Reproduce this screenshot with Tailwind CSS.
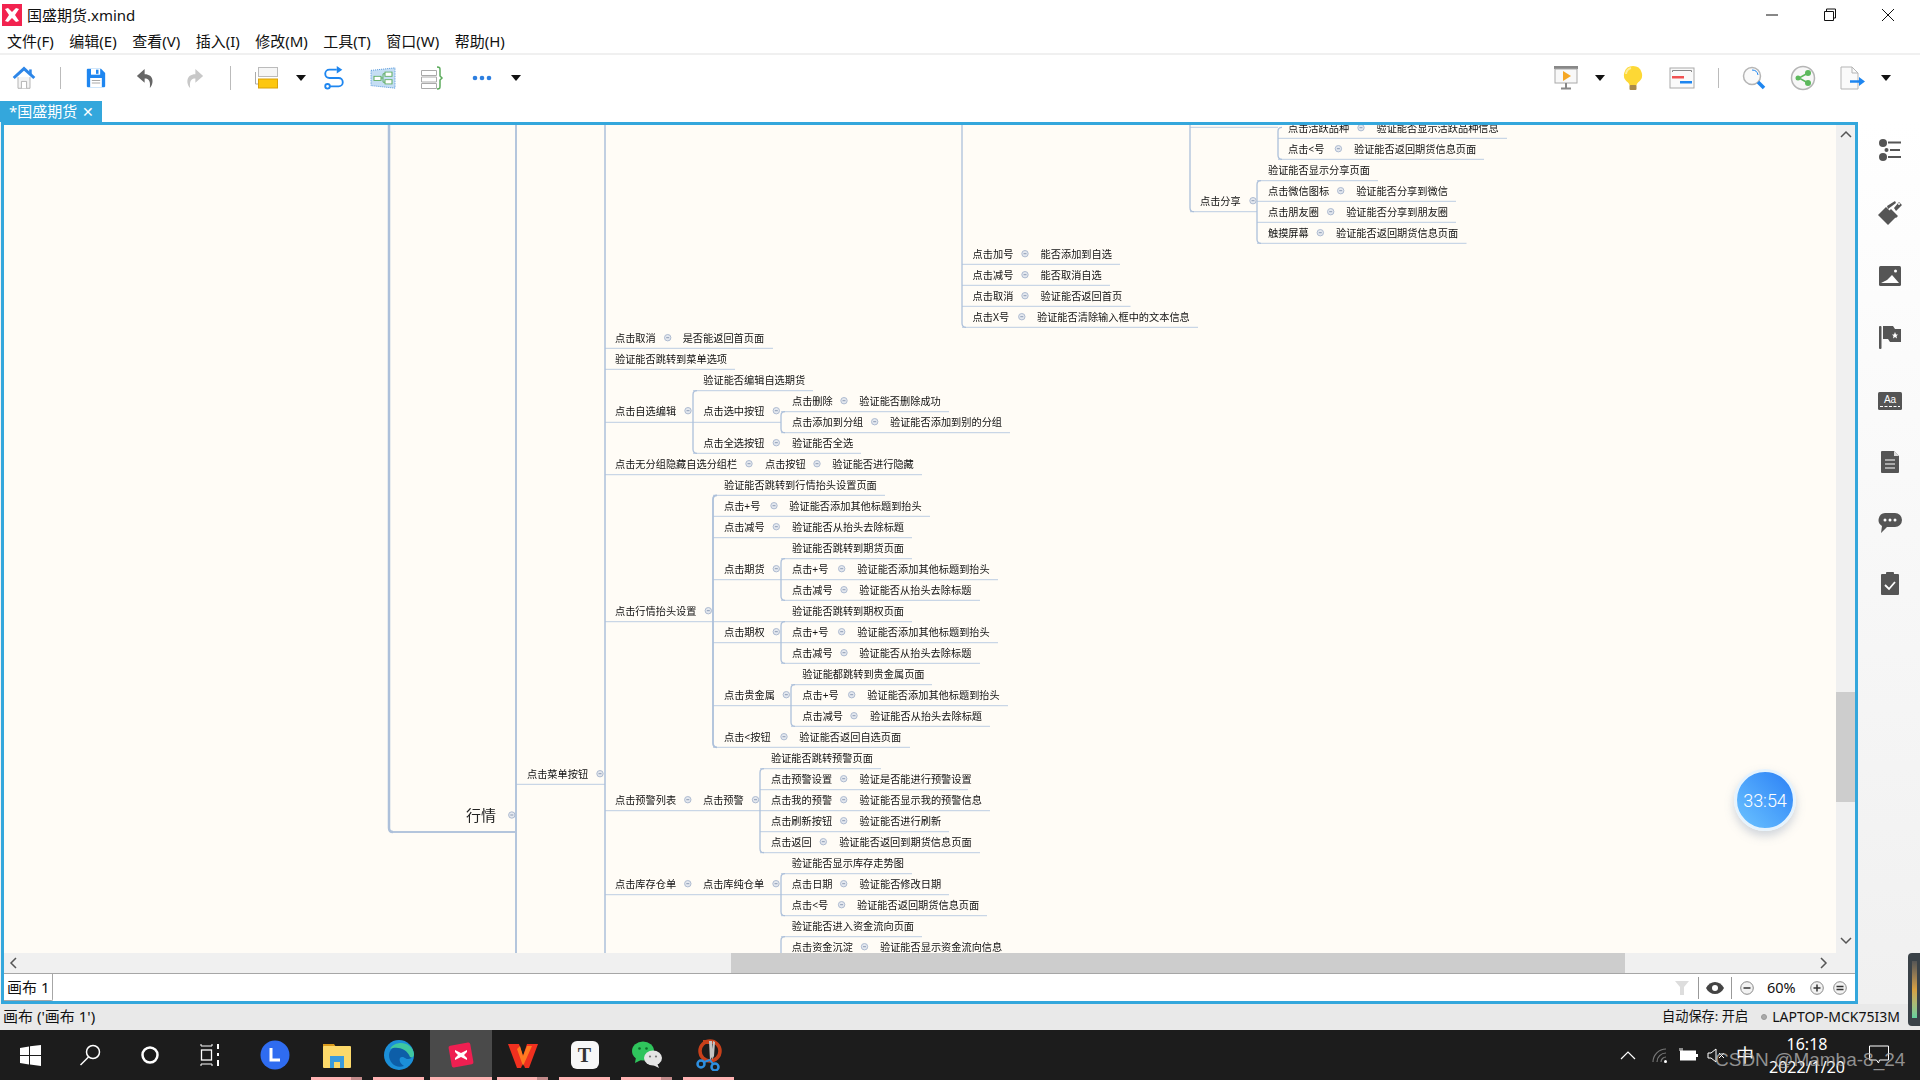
<!DOCTYPE html>
<html lang="zh">
<head>
    <meta charset="UTF-8">
    <title>国盛期货.xmind</title>
    <script src="https://cdn.jsdelivr.net/npm/@tailwindcss/browser@4"></script>
</head>
<body class="w-[1920px] h-[1080px] overflow-hidden relative flex flex-col bg-white text-[#111] [font-family:'Noto_Sans','Noto_Sans_CJK_SC',sans-serif]">

    <!-- title bar -->
    <div class="h-[30px] flex items-center shrink-0">
        <svg class="ml-[2px] w-[20px] h-[22px]" viewBox="0 0 20 22"><rect width="20" height="22" fill="#f2234f"/><path d="M3 5l3-1 4 4 4-4 3 1-4 6 4 6-3 1-4-4-4 4-3-1 4-6z" fill="#fff"/></svg>
        <span class="ml-[5px] text-[15px] leading-none">国盛期货.xmind</span>
        <div class="ml-auto flex items-center">
            <svg class="w-[14px] h-[14px]" viewBox="0 0 14 14"><path d="M1 7h12" stroke="#111" fill="none"/></svg>
            <svg class="ml-[44px] w-[14px] h-[14px]" viewBox="0 0 14 14"><path d="M3.500 3V1h9v9h-2M1.500 3.500h9v9h-9z" stroke="#111" fill="none"/></svg>
            <svg class="ml-[44px] mr-[25px] w-[14px] h-[14px]" viewBox="0 0 14 14"><path d="M1 1l12 12M13 1L1 13" stroke="#111" fill="none"/></svg>
        </div>
    </div>

    <!-- menu -->
    <div class="h-[23px] flex items-center shrink-0 pl-[7px] gap-[15.500px] text-[15px] leading-none">
        <span>文件(F)</span><span>编辑(E)</span><span>查看(V)</span><span>插入(I)</span><span>修改(M)</span><span>工具(T)</span><span>窗口(W)</span><span>帮助(H)</span>
    </div>
    <div class="h-[2px] bg-[#f0f0f0] shrink-0"></div>

    <!-- toolbar -->
    <div class="h-[46px] flex items-center justify-between shrink-0 pr-[29px]">
        <div class="flex items-center">
            <svg class="ml-[12px] w-[24px] h-[24px]" viewBox="0 0 28 28"><path d="M7 13v13h14V13" fill="#f4f4f4" stroke="#aaa"/><path d="M11 26v-8h6v8" fill="#fff" stroke="#aaa"/><path d="M2 14L14 3l12 11" fill="none" stroke="#2d86e8" stroke-width="3.500"/><rect x="20" y="4" width="3" height="6" fill="#2d86e8"/></svg>
            <div class="ml-[24px] w-px h-[22px] bg-[#bbb]"></div>
            <svg class="ml-[25px] w-[20px] h-[20px]" viewBox="0 0 24 24"><path d="M2 1h16l5 5v16a1 1 0 0 1-1 1H2a1 1 0 0 1-1-1V2a1 1 0 0 1 1-1z" fill="#1e86f0"/><rect x="6" y="1" width="11" height="7" fill="#fff"/><rect x="12" y="2" width="3" height="5" fill="#1e86f0"/><rect x="5" y="12" width="14" height="11" fill="#fff"/><path d="M7 15h10M7 18h10" stroke="#999"/></svg>
            <svg class="ml-[30px] w-[19px] h-[21px]" viewBox="0 0 22 24"><path d="M10 1L1 9l9 8v-5c5 0 7 3 6 11 5-5 5-16-6-16z" fill="#666"/></svg>
            <svg class="ml-[29.500px] w-[19px] h-[21px]" viewBox="0 0 22 24"><path d="M12 1l9 8-9 8v-5c-5 0-7 3-6 11-5-5-5-16 6-16z" fill="#c8c8c8"/></svg>
            <div class="ml-[26.500px] w-px h-[24px] bg-[#bbb]"></div>
            <svg class="ml-[24px] w-[24px] h-[22px]" viewBox="0 0 24 22"><path d="M.5 5v12H3" fill="none" stroke="#aaa"/><rect x="3.500" y="0.500" width="19" height="9" fill="#f6f6f6" stroke="#bbb"/><rect x="3.500" y="12" width="19" height="9" fill="#fdc70f" stroke="#d9a20a"/></svg>
            <svg class="ml-[17px] w-[10px] h-[6px]" viewBox="0 0 10 6"><path d="M0 0h10L5 6z" fill="#111"/></svg>
            <svg class="ml-[16px] w-[24px] h-[24px]" viewBox="0 0 24 26"><path d="M15 4H7a4.500 4.500 0 0 0 0 9h10a4.500 4.500 0 0 1 0 9H7" fill="none" stroke="#1e86f0" stroke-width="2"/><path d="M15 0l6 4-6 4z" fill="#1e86f0"/><circle cx="5" cy="22" r="2.500" fill="#fff" stroke="#1e86f0" stroke-width="2"/></svg>
            <svg class="ml-[24px] w-[26px] h-[22px]" viewBox="0 0 26 26" preserveAspectRatio="none"><path d="M1 4l24-3v24L1 22z" fill="#c5def4" stroke="#4a90d9" stroke-dasharray="1 1"/><rect x="4" y="11" width="7" height="5" fill="#fff" stroke="#5cab5c"/><rect x="15" y="6" width="7" height="5" fill="#fff" stroke="#5cab5c"/><rect x="15" y="15" width="7" height="5" fill="#fff" stroke="#5cab5c"/><path d="M11 13h2V8h2M13 13v5h2" fill="none" stroke="#5cab5c"/></svg>
            <svg class="ml-[24px] w-[24px] h-[24px]" viewBox="0 0 24 24"><path d="M1.500 4.500h15v5h-15zM1.500 11h15v5h-15zM1.500 17.500h15v5h-15z" fill="#fff" stroke="#aaa"/><path d="M17 1c3 0 3 1 3 3v6l2 2-2 2v6c0 2 0 3-3 3" fill="none" stroke="#5cab5c" stroke-width="1.500"/></svg>
            <svg class="ml-[28px] w-[20px] h-[6px]" viewBox="0 0 20 6"><circle cx="3" cy="3" r="2.300" fill="#2d7fe0"/><circle cx="10" cy="3" r="2.300" fill="#2d7fe0"/><circle cx="17" cy="3" r="2.300" fill="#2d7fe0"/></svg>
            <svg class="ml-[19px] w-[10px] h-[6px]" viewBox="0 0 10 6"><path d="M0 0h10L5 6z" fill="#111"/></svg>
        </div>
        <div class="flex items-center">
            <svg class="w-[26px] h-[24px]" viewBox="0 0 26 24"><rect x="1" width="24" height="3" fill="#888"/><rect x="2" y="3" width="22" height="14" fill="#f8f8f8" stroke="#aaa"/><path d="M10 5l8 5-8 5z" fill="#f5a623"/><path d="M13 17v5M8 22.500h10" stroke="#888" stroke-width="2"/></svg>
            <svg class="ml-[16px] w-[10px] h-[6px]" viewBox="0 0 10 6"><path d="M0 0h10L5 6z" fill="#111"/></svg>
            <svg class="ml-[18px] w-[20px] h-[26px]" viewBox="0 0 20 26"><path d="M10 1a9 9 0 0 0-5 16.500c1 1 1.500 2 1.500 3h7c0-1 .5-2 1.500-3A9 9 0 0 0 10 1z" fill="#fdd835"/><path d="M3 9a7 7 0 0 1 5-6" stroke="#ffee9a" stroke-width="2" fill="none"/><rect x="6.500" y="20" width="7" height="5" rx="1" fill="#a98a4a"/></svg>
            <svg class="ml-[26px] w-[26px] h-[22px]" viewBox="0 0 26 22"><rect x="1" y="1" width="24" height="20" fill="#fafafa" stroke="#aaa"/><path d="M3.500 5V3.500h19V5" fill="none" stroke="#888"/><rect x="3" y="9" width="12" height="2.500" fill="#f05252"/><rect x="11" y="14" width="12" height="2.500" fill="#1e86f0"/></svg>
            <div class="ml-[23px] w-px h-[20px] bg-[#bbb]"></div>
            <svg class="ml-[23px] w-[24px] h-[24px]" viewBox="0 0 24 24"><circle cx="10" cy="10" r="8.500" fill="#fafafa" stroke="#b5b5b5" stroke-width="1.500"/><path d="M10 4a6 6 0 0 1 6 5" stroke="#1e86f0" fill="none"/><path d="M16 16l6 6" stroke="#1e86f0" stroke-width="3.500"/></svg>
            <svg class="ml-[24px] w-[26px] h-[26px]" viewBox="0 0 26 26"><circle cx="13" cy="13" r="11.500" fill="#f7f7f7" stroke="#b5b5b5" stroke-width="1.500"/><path d="M18 8l-9 5 9 5" stroke="#5cb85c" stroke-width="1.500" fill="none"/><circle cx="18" cy="8" r="3" fill="#5cb85c"/><circle cx="8" cy="13" r="2.500" fill="#5cb85c"/><circle cx="18" cy="18" r="3" fill="#5cb85c"/></svg>
            <svg class="ml-[24px] w-[26px] h-[24px]" viewBox="0 0 26 24"><path d="M1 1h11l6 6v16H1z" fill="#fafafa" stroke="#b5b5b5"/><path d="M12 1v6h6" fill="none" stroke="#b5b5b5"/><path d="M10 15.500h10" stroke="#1e86f0" stroke-width="2.500"/><path d="M19 11l6 4.500-6 4.500z" fill="#1e86f0"/></svg>
            <svg class="ml-[15px] w-[10px] h-[6px]" viewBox="0 0 10 6"><path d="M0 0h10L5 6z" fill="#111"/></svg>
        </div>
    </div>

    <!-- tab -->
    <div class="h-[21px] shrink-0 flex items-stretch">
        <div class="w-[102px] bg-[#34a7dc] text-white text-[15px] leading-none flex items-center pl-[9px]">*国盛期货<span class="ml-[5px] text-[14px]">✕</span></div>
    </div>

    <!-- main area -->
    <div class="h-[882px] shrink-0 flex bg-[#f2f2f2]">
        <div class="w-[1857px] ml-px border-[3px] border-[#34a7dc] flex flex-col bg-white">
            <div class="flex h-[828px] shrink-0">
                <div id="canvas" class="w-[1832px] relative overflow-hidden bg-[#fffcf6]">
                    <svg id="lines" class="absolute left-0 top-0" width="1832" height="828"></svg>
                    <div id="topics" class="absolute left-0 top-0 blur-[0.25px]"></div>
                    <div class="absolute left-[1730px] top-[644px] w-[62px] h-[62px] rounded-full border-[3px] border-[#e6f3fd] bg-linear-to-tr from-[#6cc3ff] to-[#2b7ff5] shadow-[0_5px_10px_rgba(120,140,170,0.35)] flex items-center justify-center text-white text-[18px] font-light [font-family:Roboto,sans-serif]">33:54</div>
                </div>
                <div class="w-[19px] bg-[#f0f0f0] flex flex-col items-center relative">
                    <svg class="mt-[5px] w-[12px] h-[8px]" viewBox="0 0 12 8"><path d="M1 7l5-5 5 5" fill="none" stroke="#555" stroke-width="1.500"/></svg>
                    <div class="mt-[554px] w-full h-[110px] bg-[#cdcdcd]"></div>
                    <svg class="mt-[135px] w-[12px] h-[8px]" viewBox="0 0 12 8"><path d="M1 1l5 5 5-5" fill="none" stroke="#555" stroke-width="1.500"/></svg>
                </div>
            </div>
            <div class="h-[20px] shrink-0 bg-[#f0f0f0] flex items-center">
                <svg class="ml-[5px] w-[8px] h-[12px]" viewBox="0 0 8 12"><path d="M7 1L2 6l5 5" fill="none" stroke="#555" stroke-width="1.500"/></svg>
                <div class="ml-[714px] w-[894px] h-full bg-[#cdcdcd]"></div>
                <svg class="ml-[195px] w-[8px] h-[12px]" viewBox="0 0 8 12"><path d="M1 1l5 5-5 5" fill="none" stroke="#555" stroke-width="1.500"/></svg>
            </div>
            <div class="h-[28px] shrink-0 border-t border-[#a6a6a6] flex items-center text-[15px] leading-none">
                <div class="w-[49px] h-[27px] flex items-center pl-[3px] border-r border-b border-[#a6a6a6] rounded-br-[2px] whitespace-nowrap">画布 1</div>
                <div class="ml-auto flex items-center pr-[8px]">
                    <svg class="w-[14px] h-[16px]" viewBox="0 0 14 16"><path d="M0 1h14L9 7v8H5V7z" fill="#ddd"/></svg>
                    <div class="ml-[9px] w-px h-[22px] bg-[#999]"></div>
                    <svg class="ml-[7px] w-[18px] h-[12px]" viewBox="0 0 18 12"><path d="M0 6c4-8 14-8 18 0-4 8-14 8-18 0z" fill="#444"/><circle cx="9" cy="6" r="3" fill="#fff"/></svg>
                    <div class="ml-[7px] w-px h-[22px] bg-[#999]"></div>
                    <svg class="ml-[8px] w-[14px] h-[14px]" viewBox="0 0 14 14"><circle cx="7" cy="7" r="6.300" fill="#f2f2f2" stroke="#888"/><path d="M3.500 7h7" stroke="#333" stroke-width="1.500"/></svg>
                    <span class="ml-[13px] w-[38px] text-[14.500px]">60%</span>
                    <svg class="ml-[5px] w-[14px] h-[14px]" viewBox="0 0 14 14"><circle cx="7" cy="7" r="6.300" fill="#f2f2f2" stroke="#888"/><path d="M3.500 7h7M7 3.500v7" stroke="#333" stroke-width="1.500"/></svg>
                    <svg class="ml-[9px] w-[14px] h-[14px]" viewBox="0 0 14 14"><circle cx="7" cy="7" r="6.300" fill="#f2f2f2" stroke="#888"/><path d="M3.500 5.500h7M3.500 8.500h7" stroke="#333" stroke-width="1.500"/></svg>
                </div>
            </div>
        </div>

        <!-- right side panel -->
        <div class="flex-1 bg-linear-to-b from-white to-[#f0f0f0] flex flex-col items-center pl-[1px] pt-[17px]">
            <svg class="w-[22px] h-[22px]" viewBox="0 0 22 22"><circle cx="4" cy="4" r="4" fill="#555"/><circle cx="7.500" cy="11" r="2" fill="#555"/><circle cx="4" cy="18" r="4" fill="#555"/><path d="M9 3.500h13M11 11h10M9 18h13" stroke="#555" stroke-width="1.800"/></svg>
            <svg class="mt-[39px] w-[26px] h-[26px]" viewBox="0 0 26 26"><path d="M1 15l8-8 10 10-8 8z" fill="#555"/><path d="M10 6l8-5 1 2-8 6zM12 11l7 7 2-2-7-7zM17 8l5-6 3 3-6 6z" fill="#555"/><circle cx="22" cy="4" r="1" fill="#fff"/></svg>
            <svg class="mt-[40px] w-[22px] h-[20px]" viewBox="0 0 22 20"><rect width="22" height="20" rx="1.500" fill="#555"/><path d="M2 17l6-3 5-5 7 8z" fill="#fff"/><circle cx="16.500" cy="5" r="1.500" fill="#fff"/></svg>
            <svg class="mt-[40px] w-[22px] h-[23px]" viewBox="0 0 22 23"><rect width="2.500" height="23" rx="1" fill="#555"/><path d="M4 0h10l2 3h6v13H11l-2-3H4z" fill="#555"/><path d="M16 6l1 2.500h2l-1.500 1.500.5 2.500-2-1.500-2 1.500.5-2.500L13 8.500h2z" fill="#fff"/></svg>
            <svg class="mt-[42.500px] w-[24px] h-[18px]" viewBox="0 0 24 18"><rect width="24" height="18" rx="1.500" fill="#555"/><text x="12" y="11" text-anchor="middle" fill="#fff" font-size="10" font-family="Liberation Sans">Aa</text><path d="M2 14.500h20" stroke="#fff" stroke-dasharray="3 1.500"/></svg>
            <svg class="mt-[41px] w-[18px] h-[22px]" viewBox="0 0 18 22"><path d="M1 0h12l5 5v16a1 1 0 0 1-1 1H1a1 1 0 0 1-1-1V1a1 1 0 0 1 1-1z" fill="#555"/><path d="M13 0l5 5h-5z" fill="#ddd"/><path d="M4 9h10M4 13h10M4 17h10" stroke="#fff" stroke-width="1.200"/></svg>
            <svg class="mt-[40px] w-[24px] h-[20px]" viewBox="0 0 24 20"><path d="M7 0h10a7 7 0 0 1 0 14H9l-6 6 1-7A7 7 0 0 1 7 0z" fill="#555"/><circle cx="7" cy="7" r="1.500" fill="#fff"/><circle cx="12" cy="7" r="1.500" fill="#fff"/><circle cx="17" cy="7" r="1.500" fill="#fff"/></svg>
            <svg class="mt-[39.500px] w-[18px] h-[23px]" viewBox="0 0 18 23"><path d="M1 2h4a4 4 0 0 1 8 0h4a1 1 0 0 1 1 1v19a1 1 0 0 1-1 1H1a1 1 0 0 1-1-1V3a1 1 0 0 1 1-1z" fill="#555"/><path d="M4 13l4 4 6-7" fill="none" stroke="#fff" stroke-width="1.800"/></svg>
        </div>
    </div>

    <!-- status bar -->
    <div class="h-[26px] shrink-0 bg-[#e9e9e9] flex items-center text-[15px] leading-none pl-[3px]">
        <span class="-mt-[2px]">画布 ('画布 1')</span>
        <div class="ml-auto flex items-center pr-[20px] text-[13.200px]">
            <span>自动保存: 开启</span>
            <span class="ml-[13px] w-[6px] h-[6px] rounded-full bg-[#aaa] border border-[#999]"></span>
            <span class="ml-[5px] text-[14px]">LAPTOP-MCK75I3M</span>
        </div>
    </div>

    <!-- taskbar -->
    <div class="h-[50px] shrink-0 bg-[#1c1c1c] flex items-stretch text-white">
        <div class="w-[60px] flex items-center justify-center">
            <svg class="w-[21px] h-[21px]" viewBox="0 0 21 21"><path d="M0 3l9-1.500V10H0zM10 1.300L21 0v10H10zM0 11h9v8.500L0 18zM10 11h11v10l-11-1.500z" fill="#fff"/></svg>
        </div>
        <div class="w-[60px] flex items-center justify-center">
            <svg class="w-[22px] h-[22px]" viewBox="0 0 22 22"><circle cx="14" cy="8" r="6.500" fill="none" stroke="#fff" stroke-width="1.500"/><path d="M9.500 13L1.500 21" stroke="#fff" stroke-width="1.500"/></svg>
        </div>
        <div class="w-[60px] flex items-center justify-center">
            <svg class="w-[20px] h-[20px]" viewBox="0 0 20 20"><circle cx="10" cy="10" r="7.500" fill="none" stroke="#fff" stroke-width="2.500"/></svg>
        </div>
        <div class="w-[60px] flex items-center justify-center">
            <svg class="w-[20px] h-[26px]" viewBox="0 0 20 26"><path d="M1 4h11M1 2v2M12 2v2M1 22h11M1 24v-2M12 24v-2" stroke="#fff" fill="none"/><rect x="1.500" y="8" width="10" height="10" fill="none" stroke="#fff" stroke-width="1.300"/><path d="M18 2v5M18 11v3M18 18v6" stroke="#fff" stroke-width="2"/></svg>
        </div>
        <div class="ml-[3.500px] w-[62px] relative flex items-center justify-center">
            <svg class="w-[30px] h-[30px]" viewBox="0 0 30 30"><circle cx="15" cy="15" r="14.500" fill="#2f6cf0"/><path d="M11 8v12h9" fill="none" stroke="#fff" stroke-width="3"/></svg>
        </div>
        <div class="w-[62px] relative flex items-center justify-center">
            <svg class="w-[28px] h-[26px]" viewBox="0 0 28 26"><path d="M0 2h11l2 3H0z" fill="#d99a1c"/><rect y="4" width="28" height="22" rx="1" fill="#fcd96a"/><path d="M7 26V14h14v12h-4v-6h-6v6z" fill="#3a9bdc"/></svg>
            <div class="absolute left-[5px] bottom-0 w-[51px] h-[3px] flex"><div class="flex-1 bg-[#ffb3b3]"></div><div class="w-[11px] bg-[#c28a8a]"></div></div>
        </div>
        <div class="w-[62px] relative flex items-center justify-center">
            <svg class="w-[30px] h-[30px]" viewBox="0 0 30 30"><circle cx="15" cy="15" r="15" fill="#1b8fd8"/><path d="M5 15C6 5 20 3 27 10c3 4 2 9-3 9-3 0-3-2-6-2s-4 5 2 9c-8 3-15-3-15-11z" fill="#0d5ea8"/><path d="M6 9c5-9 22-8 24 5 0 3-2 4-4 3-3-9-14-11-20-8z" fill="#3fc7a0"/></svg>
            <div class="absolute left-[5px] bottom-0 w-[51px] h-[3px] bg-[#ffb3b3]"></div>
        </div>
        <div class="w-[62px] relative flex items-center justify-center bg-[#4a4a4a]">
            <svg class="w-[28px] h-[28px]" viewBox="0 0 28 28"><rect x="3" y="3" width="22" height="22" rx="2" fill="#ee1f51" transform="rotate(-10 14 14)"/><path d="M8 9l6 3 6-3v2l-3 3 3 3v2l-6-3-6 3v-2l3-3-3-3z" fill="#fff"/></svg>
            <div class="absolute left-0 bottom-0 w-full h-[3px] bg-[#ffb3b3]"></div>
        </div>
        <div class="w-[62px] relative flex items-center justify-center">
            <svg class="w-[30px] h-[26px]" viewBox="0 0 30 26"><path d="M0 2h11l4 12 4-12h11l-9 24h-4l-2-5-2 5H9z" fill="#f0301f"/><path d="M9 7l6 17 9-20h-5l-4 10-3-10z" fill="#ff7a20"/></svg>
            <div class="absolute left-[5px] bottom-0 w-[51px] h-[3px] flex"><div class="flex-1 bg-[#ffb3b3]"></div><div class="w-[11px] bg-[#c28a8a]"></div></div>
        </div>
        <div class="w-[62px] relative flex items-center justify-center">
            <div class="w-[28px] h-[28px] rounded-[6px] bg-[#f7f7f7] flex items-center justify-center text-[#333] text-[20px] font-bold leading-none [font-family:'Liberation_Serif',serif]">T</div>
            <div class="absolute left-[5px] bottom-0 w-[51px] h-[3px] bg-[#ffb3b3]"></div>
        </div>
        <div class="w-[62px] relative flex items-center justify-center">
            <svg class="w-[30px] h-[28px]" viewBox="0 0 30 28"><ellipse cx="11" cy="10" rx="11" ry="9.500" fill="#2fc45c"/><path d="M4 16l-1 6 6-3z" fill="#2fc45c"/><circle cx="7.500" cy="7.500" r="1.300" fill="#0d6b2c"/><circle cx="14.500" cy="7.500" r="1.300" fill="#0d6b2c"/><ellipse cx="21" cy="17" rx="9" ry="7.500" fill="#e4e4e4"/><path d="M25 22l2 5-6-3z" fill="#e4e4e4"/><circle cx="18" cy="15.500" r="1.100" fill="#777"/><circle cx="24" cy="15.500" r="1.100" fill="#777"/></svg>
            <div class="absolute left-[5px] bottom-0 w-[51px] h-[3px] flex"><div class="flex-1 bg-[#ffb3b3]"></div><div class="w-[11px] bg-[#c28a8a]"></div></div>
        </div>
        <div class="w-[62px] relative flex items-center justify-center">
            <svg class="w-[28px] h-[32px]" viewBox="0 0 28 32"><circle cx="15" cy="12" r="10" fill="none" stroke="#c8401a" stroke-width="3.500"/><path d="M8 1h10v4H8z" fill="#c8401a"/><path d="M14 2l3 0 1 14-3 6zM18 2l2 1-1 14-2 4z" fill="#c4c4c4"/><circle cx="6" cy="25" r="3.500" fill="none" stroke="#2e8fe0" stroke-width="2.500"/><circle cx="20" cy="28" r="3.500" fill="none" stroke="#2e8fe0" stroke-width="2.500"/><path d="M9 23l6-2 3 4" stroke="#2e8fe0" stroke-width="2" fill="none"/></svg>
            <div class="absolute left-[5px] bottom-0 w-[51px] h-[3px] bg-[#ffb3b3]"></div>
        </div>

        <!-- tray -->
        <div class="ml-auto flex items-center pr-[31px]">
            <svg class="w-[16px] h-[10px]" viewBox="0 0 16 10"><path d="M1 9l7-7 7 7" fill="none" stroke="#fff" stroke-width="1.200"/></svg>
            <svg class="ml-[16px] w-[16px] h-[15px]" viewBox="0 0 16 15"><path d="M1 14A13 13 0 0 1 14 1M5 14a9 9 0 0 1 9-9M9 14a5 5 0 0 1 5-5" fill="none" stroke="#777" stroke-width="1.200"/><circle cx="13.500" cy="13.500" r="1.500" fill="#fff"/></svg>
            <svg class="ml-[10px] w-[20px] h-[14px]" viewBox="0 0 20 14"><rect x="2.500" y="3" width="15" height="9" fill="#fff" stroke="#fff"/><rect x="18" y="6" width="2" height="3" fill="#fff"/><path d="M2 0v3M4 0v3" stroke="#fff"/></svg>
            <svg class="ml-[9px] w-[18px] h-[15px]" viewBox="0 0 18 15"><path d="M1 5h3l5-4v13l-5-4H1z" fill="none" stroke="#fff"/><path d="M12 5l5 5M17 5l-5 5" stroke="#fff"/></svg>
            <span class="ml-[11px] w-[20px] text-[18px] leading-none">中</span>
            <div class="ml-[5px] w-[92px] flex flex-col items-center text-[16px] leading-none gap-[7px]">
                <span>16:18</span>
                <span>2022/1/20</span>
            </div>
            <svg class="ml-[16px] w-[20px] h-[20px]" viewBox="0 0 20 20"><path d="M.5 1h19v14h-9l-1 3-2-3H.5z" fill="none" stroke="#fff"/></svg>
        </div>
    </div>

    <!-- watermark and meter widget -->
    <div class="absolute left-[1715px] top-[1050px] text-[19px] leading-none whitespace-nowrap text-[#b8b8b8]/75 [font-family:'Liberation_Sans',sans-serif]">CSDN @Mamba-8_24</div>
    <div class="absolute left-[1908px] top-[953px] w-[12px] h-[73px] bg-[#3a4248] rounded-l-[4px] pl-[4px] py-[8px]">
        <div class="h-full w-[5px] bg-linear-to-b from-[#555] via-[#d8a040] to-[#5fd0a0]"></div>
    </div>

    <script>
        // offset of the canvas inside the page
        const ox = 4, oy = 125;

        // [y, [textX, text] or dotX ...]
        const rows = [
            [128.7, [1288, '点击活跃品种'], 1361, [1376.5, '验证能否显示活跃品种信息']],
            [149.7, [1288, '点击<号'], 1338.4, [1354, '验证能否返回期货信息页面']],
            [170.7, [1268, '验证能否显示分享页面']],
            [191.7, [1268, '点击微信图标'], 1340.7, [1356.2, '验证能否分享到微信']],
            [201.7, [1200, '点击分享'], 1253],
            [212.7, [1268, '点击朋友圈'], 1330.7, [1346.2, '验证能否分享到朋友圈']],
            [233.7, [1268, '触摸屏幕'], 1320.3, [1336, '验证能否返回期货信息页面']],
            [254.7, [972.6, '点击加号'], 1025, [1040.6, '能否添加到自选']],
            [275.7, [972.6, '点击减号'], 1025, [1040.6, '能否取消自选']],
            [296.7, [972.6, '点击取消'], 1025, [1040.6, '验证能否返回首页']],
            [317.7, [972.6, '点击X号'], 1021.8, [1037, '验证能否清除输入框中的文本信息']],
            [338.7, [615, '点击取消'], 667.7, [682.7, '是否能返回首页面']],
            [359.7, [615, '验证能否跳转到菜单选项']],
            [380.7, [703.3, '验证能否编辑自选期货']],
            [401.7, [792, '点击删除'], 844, [859.3, '验证能否删除成功']],
            [411.7, [615, '点击自选编辑'], 688, [703.3, '点击选中按钮'], 776.3],
            [422.7, [792, '点击添加到分组'], 874.7, [890, '验证能否添加到别的分组']],
            [443.7, [703.3, '点击全选按钮'], 776.3, [792, '验证能否全选']],
            [464.7, [615, '点击无分组隐藏自选分组栏'], 749, [765, '点击按钮'], 817, [832.3, '验证能否进行隐藏']],
            [485.7, [724, '验证能否跳转到行情抬头设置页面']],
            [506.7, [724, '点击+号'], 774, [789.3, '验证能否添加其他标题到抬头']],
            [527.7, [724, '点击减号'], 776.3, [792, '验证能否从抬头去除标题']],
            [548.7, [792, '验证能否跳转到期货页面']],
            [569.7, [724, '点击期货'], 776.3, [792, '点击+号'], 841.7, [857.3, '验证能否添加其他标题到抬头']],
            [590.7, [792, '点击减号'], 844, [859.3, '验证能否从抬头去除标题']],
            [611.7, [615, '点击行情抬头设置'], 708.3, [792, '验证能否跳转到期权页面']],
            [632.7, [724, '点击期权'], 776.3, [792, '点击+号'], 841.7, [857.3, '验证能否添加其他标题到抬头']],
            [653.7, [792, '点击减号'], 844, [859.3, '验证能否从抬头去除标题']],
            [674.7, [802.3, '验证能都跳转到贵金属页面']],
            [695.7, [724, '点击贵金属'], 786.3, [802.3, '点击+号'], 851.7, [867.3, '验证能否添加其他标题到抬头']],
            [716.7, [802.3, '点击减号'], 854, [870, '验证能否从抬头去除标题']],
            [737.7, [724, '点击<按钮'], 784, [799.3, '验证能否返回自选页面']],
            [758.7, [771, '验证能否跳转预警页面']],
            [774.7, [527, '点击菜单按钮'], 600],
            [779.7, [771, '点击预警设置'], 843.7, [859.6, '验证是否能进行预警设置']],
            [800.7, [615, '点击预警列表'], 687.8, [703, '点击预警'], 755.5, [771, '点击我的预警'], 843.7, [859.6, '验证能否显示我的预警信息']],
            [821.7, [771, '点击刷新按钮'], 843.7, [859.6, '验证能否进行刷新']],
            [842.7, [771, '点击返回'], 823.3, [839.2, '验证能否返回到期货信息页面']],
            [863.7, [791.8, '验证能否显示库存走势图']],
            [884.7, [615, '点击库存仓单'], 687.8, [703, '点击库纯仓单'], 776, [791.8, '点击日期'], 843.7, [859.6, '验证能否修改日期']],
            [905.7, [791.8, '点击<号'], 841.6, [857, '验证能否返回期货信息页面']],
            [926.7, [791.8, '验证能否进入资金流向页面']],
            [947.7, [791.8, '点击资金沉淀'], 864.5, [880, '验证能否显示资金流向信息']],
        ];

        // [y, x1, x2]
        const underlines = [
            [127.3, 1190, 1278], [138.3, 1278, 1507], [159.3, 1278, 1484], [180.7, 1257, 1378], [201.3, 1257, 1456],
            [211.7, 1190, 1257], [222.3, 1257, 1456], [243.3, 1257, 1466.5], [264.3, 962, 1120], [285.3, 962, 1110],
            [306.3, 962, 1130.5], [327.3, 962, 1198], [348.3, 605, 773], [369.3, 605, 735], [390.7, 693, 813],
            [411.7, 781, 949], [422.3, 605, 781], [432.7, 781, 1010], [453.3, 693, 861], [474.7, 605, 922],
            [495.3, 713, 885], [516.3, 713, 930], [537.7, 713, 912], [558.7, 781, 912], [579.7, 713, 998],
            [600.3, 781, 980], [621.7, 605, 912], [642.7, 713, 998], [663.3, 781, 980], [684.7, 791, 932],
            [705.7, 713, 1008], [726.3, 791, 990], [747.3, 713, 910], [768.7, 760, 881], [784.3, 516, 605],
            [789.7, 760, 968], [810.7, 605, 990], [831.7, 760, 949], [852.7, 760, 980], [873.7, 781, 912],
            [894.7, 605, 949], [915.7, 781, 987], [936.7, 781, 922],
        ];

        // [x, top, bottom, stroke width]
        const branches = [
            [389, 100, 832, 2.5], [516, 100, 1000, 1.8], [605, 100, 1000, 1.5], [962, 100, 327.3, 1.3], [1190, 100, 211.7, 1.3],
            [1257, 180.7, 243.3, 1.3], [1278, 127.3, 159.3, 1.3], [693, 390.7, 453.3, 1.3], [781, 411.7, 432.7, 1.3],
            [713, 495.3, 747.3, 1.8], [781, 558.7, 600.3, 1.3], [781, 621.7, 663.3, 1.3], [791, 684.7, 726.3, 1.3],
            [760, 768.7, 852.7, 1.3], [781, 873.7, 915.7, 1.3], [781, 936.7, 1000, 1.3],
        ];

        const svgNS = 'http://www.w3.org/2000/svg';
        const lines = document.getElementById('lines');
        const topics = document.getElementById('topics');

        function addShape(tag, attrs) {
            const el = document.createElementNS(svgNS, tag);
            Object.entries(attrs).forEach(([k, v]) => el.setAttribute(k, v));
            lines.appendChild(el);
        }

        function addDot(x, y) {
            addShape('circle', { cx: x - ox, cy: y - oy, r: 3.2, fill: '#e4e8ef', stroke: '#aebbd0' });
            addShape('path', { d: `M${x - ox - 1.5} ${y - oy}h3`, stroke: '#8d9cb4' });
        }

        underlines.forEach(([y, x1, x2]) => {
            addShape('path', { d: `M${x1 - ox} ${y - oy}H${x2 - ox}`, stroke: '#c9d6e6', 'stroke-width': 1.3, fill: 'none' });
        });

        branches.forEach(([x, top, bottom, w]) => {
            const X = x - ox, T = top - oy, B = bottom - oy;
            addShape('path', {
                d: `M${X + 4} ${T}Q${X} ${T} ${X} ${T + 4}V${B - 4}Q${X} ${B} ${X + 4} ${B}`,
                stroke: '#adc0da', 'stroke-width': w, fill: 'none',
            });
        });

        // thick stub under the 行情 topic
        addShape('path', { d: `M${393 - ox} ${832 - oy}H${516 - ox}`, stroke: '#b4c5dc', 'stroke-width': 2, fill: 'none' });

        rows.forEach(([y, ...items]) => {
            items.forEach(item => {
                if (Array.isArray(item)) {
                    const span = document.createElement('span');
                    span.className = 'absolute whitespace-nowrap text-[10.2px] leading-none text-[#111] -translate-y-1/2';
                    span.style.left = (item[0] - ox) + 'px';
                    span.style.top = (y - oy - 1) + 'px';
                    span.textContent = item[1];
                    topics.appendChild(span);
                } else {
                    addDot(item, y - 1);
                }
            });
        });

        // the root topic is bigger than the rest
        const root = document.createElement('span');
        root.className = 'absolute whitespace-nowrap text-[15px] leading-none text-[#222] -translate-y-1/2';
        root.style.left = (466 - ox) + 'px';
        root.style.top = (815 - oy) + 'px';
        root.textContent = '行情';
        topics.appendChild(root);
        addDot(511.8, 815);
    </script>
</body>
</html>
